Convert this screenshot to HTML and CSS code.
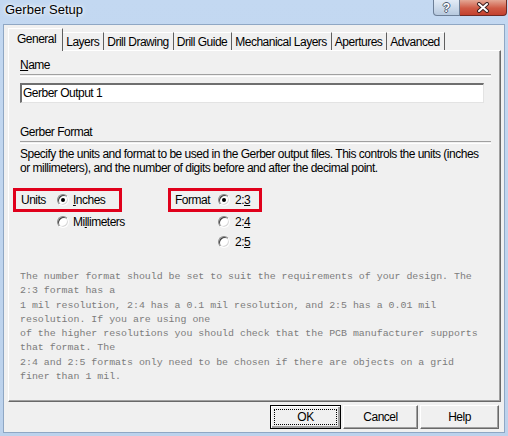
FILE: index.html
```html
<!DOCTYPE html>
<html lang="en">

<head>
  <meta charset="UTF-8">
  <title>Gerber Setup</title>
  <link rel="stylesheet" href="styles.css">
</head>

<body>
  <div class="window">
    <div class="titlebar">
      <span class="title">Gerber Setup</span>
      <div class="caption-buttons">
        <span class="cap-help">?</span>
        <span class="cap-close">
          <svg width="14" height="11" viewBox="0 0 14 11">
            <path d="M3 2 L11 9 M11 2 L3 9" stroke="#3b2020" stroke-width="4" stroke-linecap="round" />
            <path d="M3 2 L11 9 M11 2 L3 9" stroke="#ffffff" stroke-width="2" stroke-linecap="round" />
          </svg>
        </span>
      </div>
    </div>

    <div class="client">
      <!-- tab strip -->
      <div class="tabs">
        <span class="tab active">General</span>
        <span class="tab">Layers</span>
        <span class="tab">Drill Drawing</span>
        <span class="tab">Drill Guide</span>
        <span class="tab">Mechanical Layers</span>
        <span class="tab">Apertures</span>
        <span class="tab">Advanced</span>
      </div>

      <div class="page">
        <div class="label"><u>N</u>ame</div>
        <div class="sep"></div>
        <div class="name-input">Gerber Output 1</div>

        <div class="label section">Gerber Format</div>
        <div class="sep sep-format"></div>
        <p class="desc">Specify the units and format to be used in the Gerber output files. This controls the units (inches<br>or millimeters), and the number of digits before and after the decimal point.</p>

        <div class="options">
          <div class="group group-units">
            <div class="boxed">
              <span class="opt-label">Units</span>
              <span class="radio checked"></span>
              <span><u>I</u>nches</span>
            </div>
            <div class="opt-row">
              <span class="radio"></span>
              <span>Mi<u>l</u>limeters</span>
            </div>
          </div>

          <div class="group group-format">
            <div class="boxed">
              <span class="opt-label">Format</span>
              <span class="radio checked"></span>
              <span>2:<u>3</u></span>
            </div>
            <div class="opt-row">
              <span class="radio"></span>
              <span>2:<u>4</u></span>
            </div>
            <div class="opt-row">
              <span class="radio"></span>
              <span>2:<u>5</u></span>
            </div>
          </div>
        </div>

        <pre class="note">The number format should be set to suit the requirements of your design. The
2:3 format has a
1 mil resolution, 2:4 has a 0.1 mil resolution, and 2:5 has a 0.01 mil
resolution. If you are using one
of the higher resolutions you should check that the PCB manufacturer supports
that format. The
2:4 and 2:5 formats only need to be chosen if there are objects on a grid
finer than 1 mil.</pre>
      </div>

      <div class="buttons">
        <button class="btn btn-default"><span class="focus">OK</span></button>
        <button class="btn btn-cancel">Cancel</button>
        <button class="btn btn-help">Help</button>
      </div>
    </div>
  </div>
</body>

</html>
```

FILE: styles.css
```css
body {
  margin: 0;
  font-family: "Liberation Sans", Arial, sans-serif;
  font-size: 12px;
  letter-spacing: -0.5px;
  color: #000;
}

.window {
  width: 508px;
  height: 436px;
  box-sizing: border-box;
  padding: 0 3px 3px 3px;
  background: linear-gradient(to bottom, #c3d8f1, #bcd2ec);
}

.titlebar {
  height: 24px;
  display: flex;
  justify-content: space-between;
  align-items: flex-start;
}

.title {
  font-size: 13px;
  letter-spacing: 0;
  line-height: 20px;
  padding-left: 2px;
  text-shadow: 0 0 6px #fff, 0 0 3px #fff;
}

.caption-buttons {
  display: flex;
  margin-right: -2px;
}

.cap-help,
.cap-close {
  height: 15px;
  display: flex;
  align-items: center;
  justify-content: center;
  border: 1px solid #6d7f97;
  border-top: none;
}

.cap-help {
  width: 25px;
  border-radius: 0 0 0 4px;
  background: linear-gradient(to bottom, #e2ebf6, #b7c9de);
  color: #fff;
  font-weight: bold;
  font-size: 12px;
  letter-spacing: 0;
  text-shadow: 1px 0 #4a5a70, -1px 0 #4a5a70, 0 1px #4a5a70, 0 -1px #4a5a70;
}

.cap-close {
  width: 46px;
  border-left: none;
  border-color: #6f2a24;
  border-radius: 0 0 4px 0;
  background: linear-gradient(to bottom, #e4a795, #cf5a45 55%, #c3412f);
}

.client {
  height: 409px;
  box-sizing: border-box;
  background: #f0f0f0;
  border: 1px solid #8fa7c4;
  padding: 3px 3px 0 4px;
}

/* tab strip */
.tabs {
  display: flex;
  align-items: flex-end;
  height: 22px;
}

.tab {
  height: 18px;
  line-height: 18px;
  padding: 0 4px 0 3px;
  border-top: 1px solid #fff;
  border-right: 1px solid #5f5f5f;
  box-sizing: border-box;
  white-space: nowrap;
}

.tab.active {
  height: 23px;
  line-height: 21px;
  margin-bottom: -1px;
  padding: 0 6px 0 8px;
  border-left: 1px solid #fff;
  background: #f0f0f0;
  position: relative;
}

.page {
  height: 352px;
  box-sizing: border-box;
  border-top: 1px solid #fff;
  border-left: 1px solid #fff;
  border-right: 1px solid #696969;
  border-bottom: 1px solid #696969;
  box-shadow: inset -1px -1px 0 #a0a0a0;
  padding: 7px 11px 0 11px;
}

.label {
  line-height: 14px;
}

.sep {
  margin-top: 2px;
  height: 1px;
  width: 471px;
  border-top: 1px solid #a0a0a0;
  border-bottom: 1px solid #fff;
}

.name-input {
  margin-top: 6px;
  width: 464px;
  height: 20px;
  box-sizing: border-box;
  background: #fff;
  border-top: 2px solid #6f6f6f;
  border-left: 2px solid #6f6f6f;
  border-right: 1px solid #e3e3e3;
  border-bottom: 1px solid #e3e3e3;
  line-height: 17px;
  padding-left: 1px;
}

.section {
  margin-top: 22px;
}

.sep-format {
  margin-top: 2px;
}

.desc {
  margin: 3px 0 0 0;
  line-height: 14px;
  white-space: nowrap;
}

/* unit and format choices */
.options {
  display: flex;
  margin: 13px 0 0 -7px;
}

.group-units {
  width: 155px;
}

.boxed {
  display: flex;
  align-items: center;
  height: 24px;
  box-sizing: border-box;
  border: 3px solid #e0001b;
}

.group-units .boxed {
  width: 109px;
  padding-left: 5px;
}

.group-format .boxed {
  width: 94px;
  padding-left: 4px;
}

.group-units .opt-label {
  width: 36px;
}

.group-format .opt-label {
  width: 43px;
}

.opt-row {
  display: flex;
  align-items: center;
  height: 20px;
}

.group-units .opt-row {
  padding-left: 44px;
}

.group-format .opt-row {
  padding-left: 50px;
}

.radio {
  width: 12px;
  height: 12px;
  box-sizing: border-box;
  border-radius: 50%;
  border: 1px solid;
  border-color: #8a8a8a #fdfdfd #fdfdfd #8a8a8a;
  box-shadow: inset 1px 1px 0 #404040, inset -1px -1px 0 #d8d8d8;
  background: #fff;
  margin-right: 4px;
  position: relative;
}

.group-format .radio {
  margin-right: 5px;
}

.radio.checked::after {
  content: "";
  position: absolute;
  left: 3px;
  top: 3px;
  width: 4px;
  height: 4px;
  border-radius: 50%;
  background: #000;
}

.note {
  margin: 18px 0 0 0;
  font-family: "Liberation Mono", monospace;
  font-size: 9.92px;
  letter-spacing: 0;
  line-height: 14.3px;
  color: #7c7c7c;
}

/* bottom buttons */
.buttons {
  display: flex;
  justify-content: flex-end;
  gap: 2px;
  margin-top: 3px;
  padding-right: 2px;
}

.btn {
  height: 24px;
  font-family: inherit;
  font-size: 12px;
  letter-spacing: -0.5px;
  background: #f0f0f0;
  border: 1px solid;
  border-color: #fff #696969 #696969 #fff;
  box-shadow: inset -1px -1px 0 #a0a0a0;
  padding: 0;
}

.btn-default {
  width: 71px;
  border: 1px solid #000;
  box-shadow: inset 1px 1px 0 #fff, inset -2px -2px 0 #a0a0a0, inset -1px -1px 0 #696969;
  padding: 3px;
}

.btn-default .focus {
  display: block;
  height: 100%;
  box-sizing: border-box;
  border: 1px dotted #000;
  line-height: 14px;
}

.btn-cancel {
  width: 75px;
}

.btn-help {
  width: 79px;
}
```
